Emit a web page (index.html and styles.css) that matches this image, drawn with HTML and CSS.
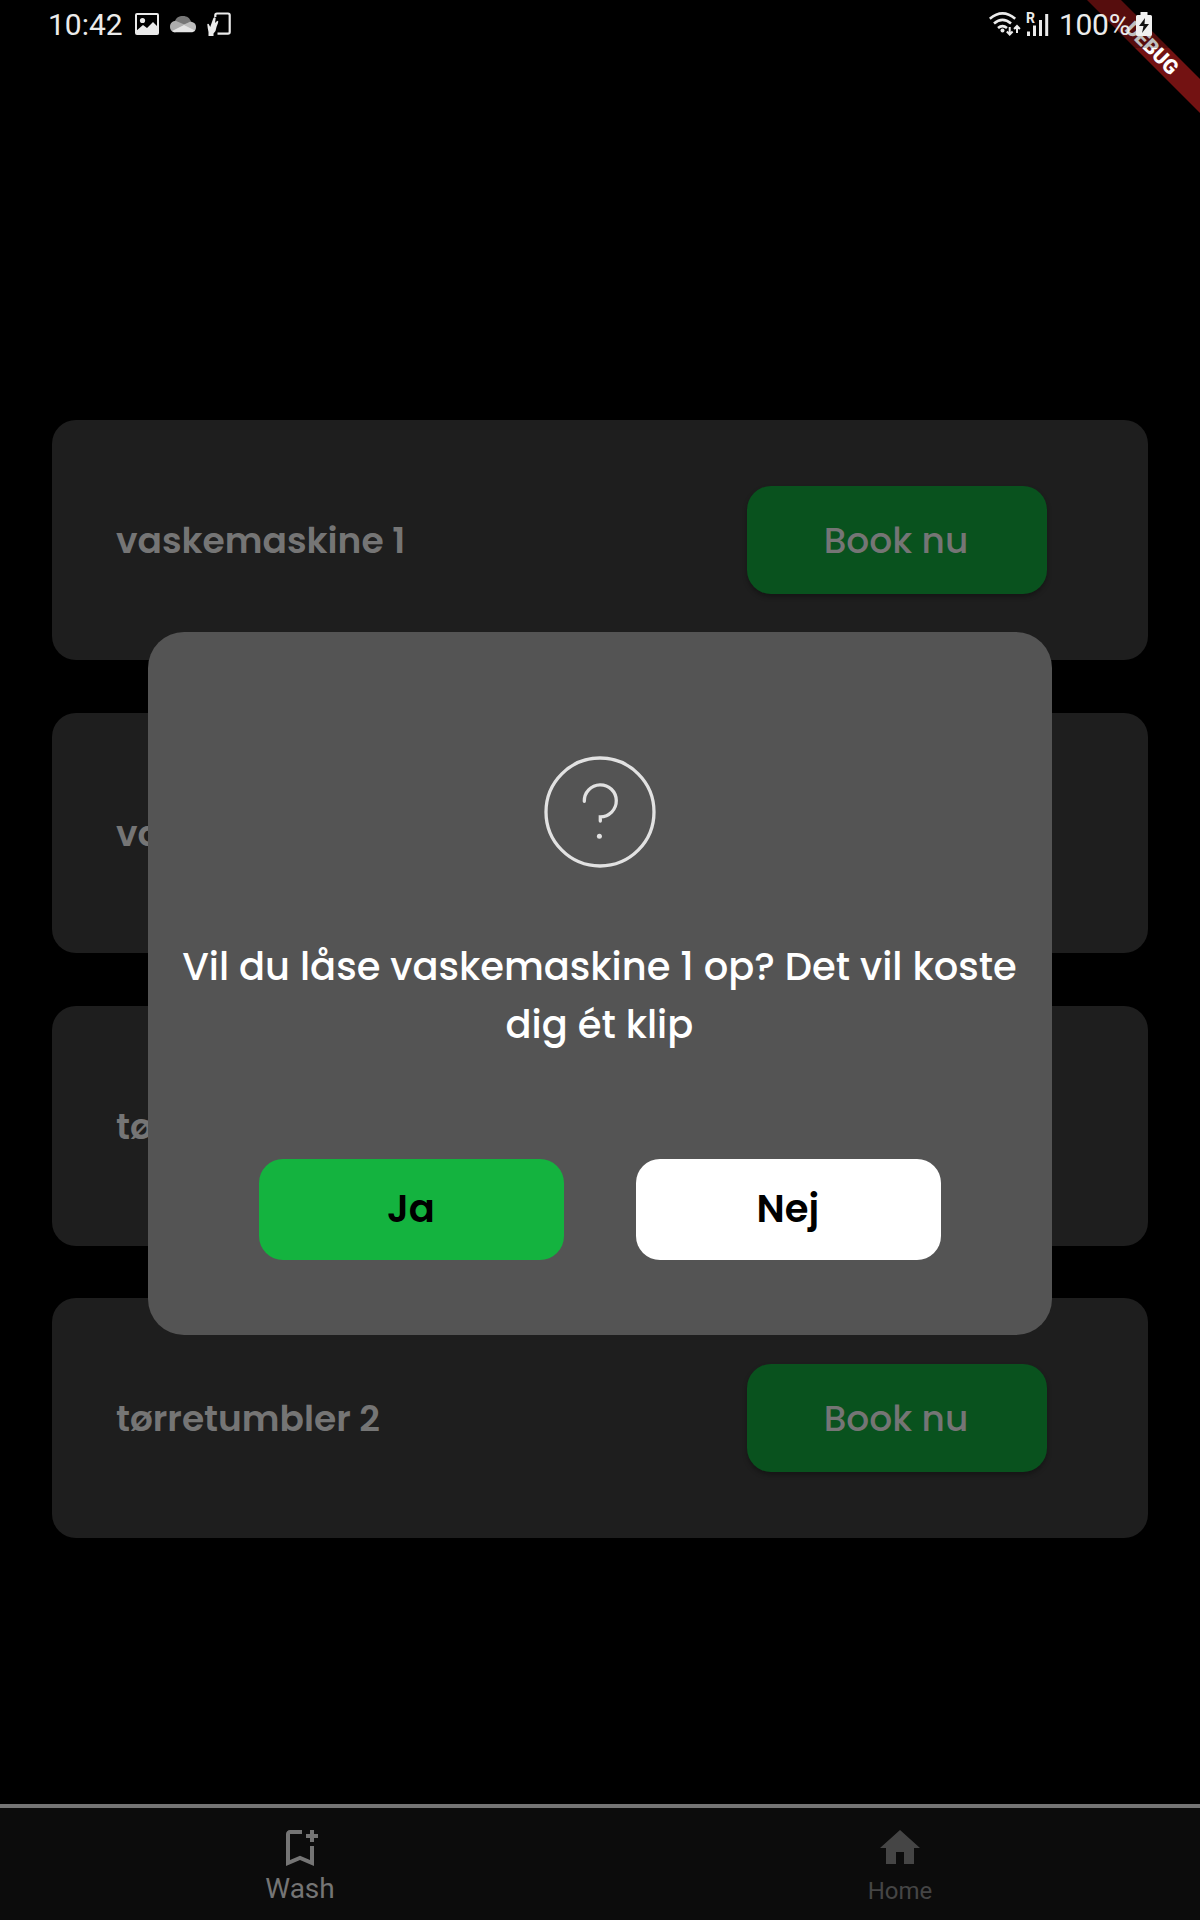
FILE: index.html
```html
<!DOCTYPE html>
<html lang="da">
<head>
<meta charset="utf-8">
<title>Vaskeri</title>
<link rel="stylesheet" href="styles.css">
</head>
<body>
<div class="app">
  <header class="status">
    <div class="status-left">
      <span class="clock">10:42</span>
      <svg class="ic-image" width="24" height="22" viewBox="0 0 24 22"><rect x="1" y="1" width="22" height="20" rx="1" fill="none" stroke="#ebebeb" stroke-width="2"/><circle cx="7.500" cy="7.500" r="2.600" fill="#ebebeb"/><path d="M1 18l7-6 4 3 6-6 5 5v7H1z" fill="#ebebeb"/></svg>
      <svg class="ic-cloud" width="26" height="17" viewBox="0 0 26 17"><path d="M4.500 6C6 1.500 9 0 13 0c4 0 7 2 8 6l-8 4z" fill="#777"/><path d="M5 16.300C1 16 0 13 0 10.500 0 7 2.500 5 6 5l12 5-8 5z" fill="#adadad"/><path d="M13 9l7-3.300c4 0 6 2.300 6 5.300 0 2-.7 3.500-2 4.500z" fill="#bdbdbd"/><path d="M2 15l12-6 11 5.500c-1 1.200-2 1.800-4 1.800H5c-1.200 0-2.200-.4-3-1.300z" fill="#e4e4e4"/></svg>
      <svg class="ic-share" width="24" height="25" viewBox="0 0 24 25"><path d="M8.300 5V3.200Q8.300 1.500 10 1.500H21Q22.700 1.500 22.700 3.200V20Q22.700 21.700 21 21.700H10.500" fill="none" stroke="#ebebeb" stroke-width="2.200"/><path d="M1.500 24V20Q.6 16 .3 12.500Q.6 11.200 1.700 12L3.200 15 6.200 6.500Q7.500 4.500 8.700 6L8 11 10.300 8.700Q12 9 11 11L9.500 15 8.500 19 6.500 21.500V24z" fill="#ebebeb"/></svg>
    </div>
    <div class="status-right">
      <svg width="32" height="25" viewBox="0 0 32 25"><g fill="none" stroke="#ebebeb" stroke-width="2.600"><path d="M.8 6.700Q13.500-4 26.200 6.700"/><path d="M5 11.500Q13.500 4.200 22 11.500"/><path d="M9 16Q13.500 12.200 18 16"/></g><circle cx="13.500" cy="18.500" r="2" fill="#ebebeb"/><path d="M20.700 15v7M17.800 19.500l2.900 3 2.900-3M28 21v-7M25.100 17l2.900-3 2.900 3" fill="none" stroke="#ebebeb" stroke-width="2"/></svg>
      <div class="signal">
        <span class="roaming">R</span>
        <svg width="23" height="25" viewBox="0 0 23 25"><path d="M1 19.500h3V24H1zM7 13.500h3V24H7zM13 8h3v16H13zM19.200 2h3v22h-3z" fill="#ebebeb"/></svg>
      </div>
      <span class="percent">100%</span>
      <svg class="ic-batt" width="16" height="24" viewBox="0 0 16 24"><path d="M4.500 0h7v3H14.500Q16 3 16 4.500V22.500Q16 24 14.500 24H1.500Q0 24 0 22.500V4.500Q0 3 1.500 3h3z" fill="#f0f0f0"/><path d="M9 6L3 14h4.500L6 21l7-9H8.500z" fill="#111"/></svg>
    </div>
  </header>
  <div class="ribbon-clip"><div class="ribbon">DEBUG</div></div>

  <main class="machines">
    <section class="card"><span class="name">vaskemaskine 1</span><button class="book">Book nu</button></section>
    <section class="card"><span class="name">vaskemaskine 2</span></section>
    <section class="card"><span class="name">tørretumbler 1</span></section>
    <section class="card"><span class="name">tørretumbler 2</span><button class="book">Book nu</button></section>
  </main>

  <nav class="tabs">
    <div class="tab active">
      <svg width="48" height="48" viewBox="0 0 24 24"><path fill="currentColor" d="M17 11v6.970l-5-2.140-5 2.140V5h6V3H7c-1.100 0-2 .9-2 2v16l7-3 7 3V11h-2zm4-4h-2v2h-2V7h-2V5h2V3h2v2h2v2z"/></svg>
      <span>Wash</span>
    </div>
    <div class="tab">
      <svg width="48" height="48" viewBox="0 0 24 24"><path fill="currentColor" d="M10 20v-6h4v6h5v-8h3L12 3 2 12h3v8z"/></svg>
      <span>Home</span>
    </div>
  </nav>

  <div class="dialog">
    <svg class="ask" width="112" height="112" viewBox="0 0 112 112" fill="none" stroke="#e2e2e2" stroke-width="3.300"><circle cx="56" cy="56" r="54"/><path d="M40.300 45.300A16 16 0 1 1 56.300 60.800V65" stroke-linecap="round"/><circle cx="55.400" cy="80.200" r="2.500" fill="#e2e2e2" stroke="none"/></svg>
    <p class="question">Vil du låse vaskemaskine 1 op? Det vil koste<br>dig ét klip</p>
    <div class="actions"><button class="yes">Ja</button><button class="no">Nej</button></div>
  </div>
</div>
</body>
</html>
```
FILE: styles.css
```css
* { box-sizing: border-box; }
body { margin: 0; background: #000; }
button { border: 0; padding: 0; margin: 0; }

.app {
  position: relative;
  width: 1200px;
  height: 1920px;
  display: flex;
  flex-direction: column;
  overflow: hidden;
  background: #000;
  font-family: Poppins, Inter, sans-serif;
  font-feature-settings: "cv11";
}

/* status bar */
.status {
  position: relative;
  z-index: 2;
  height: 48px;
  flex: none;
  display: flex;
  justify-content: space-between;
  padding: 12px 48px 0 48px;
  background: rgba(0, 0, 0, .25);
  color: #ebebeb;
  font: 30px/25px Roboto, sans-serif;
}
.status-left, .status-right { display: flex; align-items: flex-start; height: 25px; }
.clock { width: 87px; }
.ic-image { margin-top: 1px; }
.ic-cloud { margin: 4px 11px 0 11px; }
.signal { display: flex; position: relative; margin: 0 10px 0 5px; }
.roaming { position: absolute; left: 0; top: -1px; font: 700 14px/14px Roboto, sans-serif; }
.percent { width: 77px; white-space: nowrap; letter-spacing: -.3px; }

.ribbon-clip { position: absolute; z-index: 1; top: 0; right: 0; width: 140px; height: 140px; overflow: hidden; }
.ribbon {
  position: absolute;
  left: -8px;
  top: 36px;
  width: 200px;
  height: 24px;
  background: #731212;
  color: #fff;
  font: 900 20.4px/24px Roboto, sans-serif;
  text-align: center;
  transform: rotate(45deg);
}

/* machine list */
.machines { flex: 1; padding: 372px 52px 0 52px; display: flex; flex-direction: column; gap: 52.8px; }
.card {
  height: 240px;
  flex: none;
  display: flex;
  align-items: center;
  justify-content: space-between;
  padding: 0 101.500px 0 64px;
  border-radius: 24px;
  background: #1e1e1e;
}
.name { padding-top: 2px; color: #757575; font-size: 36px; font-weight: 600; line-height: 54px; white-space: nowrap; }
.book {
  width: 300px;
  height: 108px;
  padding: 2px 1px 0 0;
  border-radius: 24px;
  background: #09521e;
  color: #757575;
  font: 500 36px/54px Poppins, Inter, sans-serif;
  font-feature-settings: "cv11";
  box-shadow: 0 3px 5px rgba(0, 0, 0, .3);
}

/* bottom tabs */
.tabs { height: 116px; flex: none; display: flex; border-top: 4px solid #757575; background: #0c0c0c; font-family: Roboto, sans-serif; }
.tab { flex: 1; display: flex; flex-direction: column; align-items: center; padding-top: 16px; color: #454545; font-size: 24px; line-height: 38px; }
.tab.active { color: #757575; font-size: 28px; line-height: 34px; }

/* confirmation dialog */
.dialog {
  position: absolute;
  z-index: 3;
  left: 147.6px;
  top: 632px;
  width: 904.6px;
  height: 703.4px;
  padding-top: 124.300px;
  display: flex;
  flex-direction: column;
  align-items: center;
  border-radius: 36px;
  background: #545454;
}
.ask { flex: none; }
.question { margin: 69.700px 0 0; padding-right: 1px; color: #fff; font-size: 38.4px; font-weight: 500; line-height: 58px; text-align: center; white-space: nowrap; }
.actions { display: flex; gap: 72px; margin-top: 105px; }
.actions button {
  width: 305px;
  height: 101px;
  padding: 0 1px 0 0;
  border-radius: 24px;
  color: #000;
  font: 600 38.4px/58px Poppins, Inter, sans-serif;
  font-feature-settings: "cv11";
}
.actions .yes { background: #14b33f; }
.actions .no { background: #fff; }
```
